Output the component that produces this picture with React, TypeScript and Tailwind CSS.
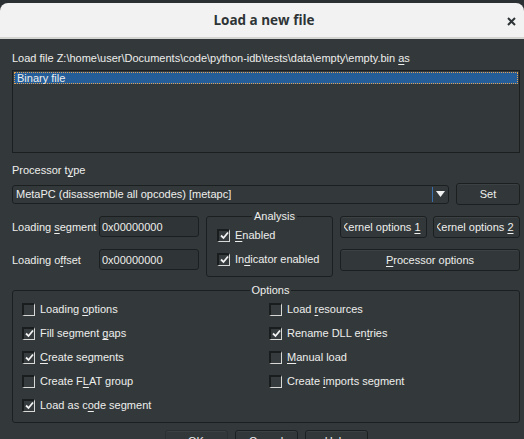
import React from 'react';

const font = { fontFamily: '"Liberation Sans", Arial, sans-serif' };

function U({ children }: { children: React.ReactNode }) {
  return <span className="underline underline-offset-[2px] decoration-[1px]">{children}</span>;
}

function Check({ checked }: { checked?: boolean }) {
  return (
    <span className="inline-flex h-[13px] w-[13px] shrink-0 items-center justify-center border-t-[2px] border-l-[2px] border-b border-r border-t-[#1a1d1e] border-l-[#1a1d1e] border-b-[#d8d8d6] border-r-[#d8d8d6] bg-[#363c3e]">
      {checked && (
        <svg width="9" height="9" viewBox="0 0 9 9">
          <path d="M1 4.5 L3.5 7 L8 1.5" stroke="#f2f2f2" strokeWidth="1.8" fill="none" />
        </svg>
      )}
    </span>
  );
}

function CheckRow({ checked, children }: { checked?: boolean; children: React.ReactNode }) {
  return (
    <div className="flex h-[24px] items-center gap-[5px]">
      <Check checked={checked} />
      <span className="pt-[1px]">{children}</span>
    </div>
  );
}

function Btn({ children, className = '' }: { children: React.ReactNode; className?: string }) {
  return (
    <div
      className={`flex h-[22px] shrink-0 items-center justify-center overflow-hidden whitespace-nowrap rounded-[3px] border border-[#1c1f20] bg-[#32383a] shadow-[inset_0_1px_0_#3c4244] ${className}`}
    >
      {children}
    </div>
  );
}

function Field({ value }: { value: string }) {
  return (
    <div className="flex h-[21px] w-[100px] items-center rounded-[3px] border border-[#1c1f20] bg-[#2f3436] pl-[2px] pt-[1px]">
      {value}
    </div>
  );
}

function KernelBtn({ n }: { n: string }) {
  return (
    <Btn className="w-[87px] !justify-start">
      <div className="ml-[3px] flex flex-1 overflow-hidden">
        <span className="-ml-[3px] whitespace-nowrap">
          Kernel options <U>{n}</U>
        </span>
      </div>
    </Btn>
  );
}

export default function App() {
  return (
    <div className="h-[439px] w-[524px] overflow-hidden bg-[#2b3032] text-[11px] text-[#eeeeec]" style={font}>
      <div className="relative mt-[3px] flex h-[36px] items-center justify-center rounded-tl-[8px] rounded-tr-[8px] border-b-[2px] border-b-[#d4d4d2] bg-[#f2f2f2]">
        <span className="pl-[4px] text-[13.5px] font-bold text-[#2e3436]" style={{ fontFamily: '"Open Sans", sans-serif' }}>
          Load a new file
        </span>
        <svg className="absolute right-[8px] top-[14px]" width="9" height="9" viewBox="0 0 9 9">
          <path d="M1 1 L8 8 M8 1 L1 8" stroke="#2e3436" strokeWidth="2" />
        </svg>
      </div>

      <div className="bg-[#33393b] pb-[20px] pl-[12px] pr-[4px]">
        <div className="pt-[13px] leading-[13px]">
          Load file Z:\home\user\Documents\code\python-idb\tests\data\empty\empty.bin <U>a</U>s
        </div>

        <div className="mt-[5px] h-[83px] border border-[#1c1f20] bg-[#33393b] p-[1px]">
          <div className="h-[12px] border border-dotted border-[#e0a050] bg-[#255d99] pl-[2px] leading-[10px]">Binary file</div>
        </div>

        <div className="mt-[11px] leading-[13px]">
          Processor t<U>y</U>pe
        </div>

        <div className="mt-[6px] flex h-[22px] items-center gap-[7px]">
          <div className="flex h-[19px] flex-1 items-center rounded-[3px] border border-[#1c1f20] bg-[#33393b]">
            <span className="flex-1 pl-[3px]">MetaPC (disassemble all opcodes) [metapc]</span>
            <span className="h-[15px] w-[1px] bg-[#3a6ea8]" />
            <span className="flex w-[15px] items-center justify-center">
              <svg width="9" height="6" viewBox="0 0 9 6">
                <path d="M0 0 H9 L4.5 6 Z" fill="#f2f2f2" />
              </svg>
            </span>
          </div>
          <Btn className="w-[64px]">Set</Btn>
        </div>

        <div className="mt-[11px] flex gap-[7px]">
          <div className="flex flex-col gap-[12px]">
            <div className="flex items-center">
              <span className="w-[87px] pt-[2px]">
                Loading <U>s</U>egment
              </span>
              <Field value="0x00000000" />
            </div>
            <div className="flex items-center">
              <span className="w-[87px] pt-[2px]">
                Loading o<U>f</U>fset
              </span>
              <Field value="0x00000000" />
            </div>
          </div>

          <fieldset className="-mt-[6px] h-[67px] w-[128px] rounded-[3px] border border-[#1c1f20] pl-[10px]">
            <legend className="mx-auto px-[2px] leading-[12px]">Analysis</legend>
            <div className="mt-[1px]">
              <CheckRow checked>
                <U>E</U>nabled
              </CheckRow>
              <CheckRow checked>
                In<U>d</U>icator enabled
              </CheckRow>
            </div>
          </fieldset>

          <div className="flex flex-1 flex-col gap-[11px]">
            <div className="flex gap-[6px]">
              <KernelBtn n="1" />
              <KernelBtn n="2" />
            </div>
            <Btn>
              <span>
                <U>P</U>rocessor options
              </span>
            </Btn>
          </div>
        </div>

        <fieldset className="mt-[7px] h-[139px] rounded-[3px] border border-[#1c1f20] pl-[9px]">
          <legend className="mx-auto px-[2px] leading-[12px]">Options</legend>
          <div className="mt-[1px] grid grid-cols-[247px_1fr]">
            <div className="flex flex-col">
              <CheckRow>
                Loading <U>o</U>ptions
              </CheckRow>
              <CheckRow checked>
                Fill segment <U>g</U>aps
              </CheckRow>
              <CheckRow checked>
                <U>C</U>reate segments
              </CheckRow>
              <CheckRow>
                Create F<U>L</U>AT group
              </CheckRow>
              <CheckRow checked>
                Load as c<U>o</U>de segment
              </CheckRow>
            </div>
            <div className="flex flex-col">
              <CheckRow>
                Load <U>r</U>esources
              </CheckRow>
              <CheckRow checked>
                Rename DLL en<U>t</U>ries
              </CheckRow>
              <CheckRow>
                <U>M</U>anual load
              </CheckRow>
              <CheckRow>
                Create <U>i</U>mports segment
              </CheckRow>
            </div>
          </div>
        </fieldset>

        <div className="mt-[7px] flex justify-center gap-[7px]">
          <Btn className="w-[63px] !border-[#2a2f31]">OK</Btn>
          <Btn className="w-[63px]">Cancel</Btn>
          <Btn className="w-[63px]">Help</Btn>
        </div>
      </div>
    </div>
  );
}
